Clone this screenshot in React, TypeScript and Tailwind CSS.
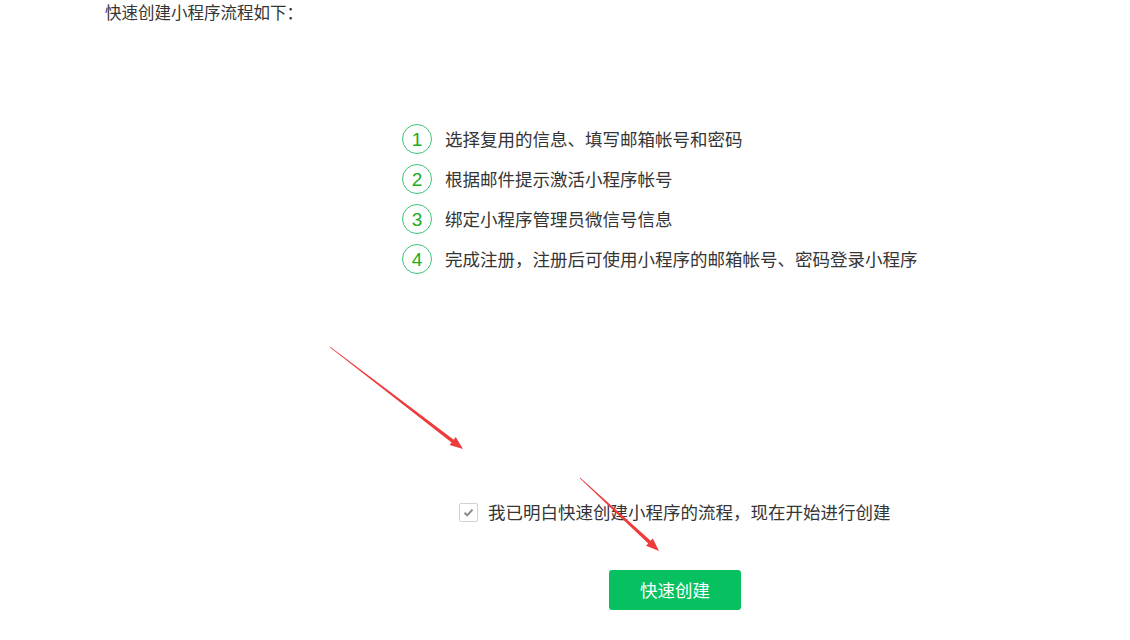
import React from 'react';

const steps = [
  '选择复用的信息、填写邮箱帐号和密码',
  '根据邮件提示激活小程序帐号',
  '绑定小程序管理员微信号信息',
  '完成注册，注册后可使用小程序的邮箱帐号、密码登录小程序',
];

// tapered annotation arrow, tail -> tip
const arrowPoints = (x1: number, y1: number, x2: number, y2: number) => {
  const len = Math.hypot(x2 - x1, y2 - y1);
  const dx = (x2 - x1) / len;
  const dy = (y2 - y1) / len;
  const nx = -dy;
  const ny = dx;
  const head = 13;
  const bx = x2 - dx * head;
  const by = y2 - dy * head;
  const pts: [number, number][] = [
    [x1 + nx * 0.4, y1 + ny * 0.4],
    [bx + nx * 1.8, by + ny * 1.8],
    [bx + nx * 5, by + ny * 5],
    [x2, y2],
    [bx - nx * 5, by - ny * 5],
    [bx - nx * 1.8, by - ny * 1.8],
    [x1 - nx * 0.4, y1 - ny * 0.4],
  ];
  return pts.map(p => p.join(',')).join(' ');
};

const App: React.FC = () => {
  return (
    <div className="relative w-[1130px] h-[640px] bg-white overflow-hidden text-[#353535] font-['Microsoft_YaHei','Noto_Sans_CJK_SC',sans-serif]">
      {/* Title */}
      <div className="pl-[105px] pt-[1px] text-[16.5px] leading-[22px]">快速创建小程序流程如下：</div>

      {/* Steps */}
      <div className="mt-[101px] pl-[402px] flex flex-col gap-[10px]">
        {steps.map((s, i) => (
          <div key={i} className="flex items-center h-[30px]">
            <div className="w-[30px] h-[30px] rounded-full border border-[#3cc27a] flex items-center justify-center text-[#1aad19] text-[19px] leading-none font-['Liberation_Sans',sans-serif]">
              {i + 1}
            </div>
            <span className="ml-[13px] text-[17.5px] leading-[24px] whitespace-nowrap">{s}</span>
          </div>
        ))}
      </div>

      {/* Agreement */}
      <div className="mt-[226px] pl-[459px] flex items-center h-[24px]">
        <span className="w-[19px] h-[19px] border border-[#d2d2d2] rounded-[2px] flex items-center justify-center bg-white">
          <svg width="13" height="13" viewBox="0 0 13 13">
            <path d="M2.5 6.8 L5.2 9.4 L10.5 3.6" fill="none" stroke="#8a8a8a" strokeWidth="2" />
          </svg>
        </span>
        <span className="ml-[10px] text-[17.5px] leading-[24px] whitespace-nowrap">我已明白快速创建小程序的流程，现在开始进行创建</span>
      </div>

      {/* Button */}
      <div className="mt-[46px] pl-[609px]">
        <button className="w-[132px] h-[40px] rounded-[3px] bg-[#07c160] text-white text-[17.5px] leading-none">
          快速创建
        </button>
      </div>

      {/* Annotation arrows */}
      <svg className="absolute inset-0 pointer-events-none" width="1130" height="640">
        <polygon points={arrowPoints(330, 347, 463, 449)} fill="#ee3b3b" />
        <polygon points={arrowPoints(580, 478, 659, 551)} fill="#ee3b3b" />
      </svg>
    </div>
  );
};

export default App;
